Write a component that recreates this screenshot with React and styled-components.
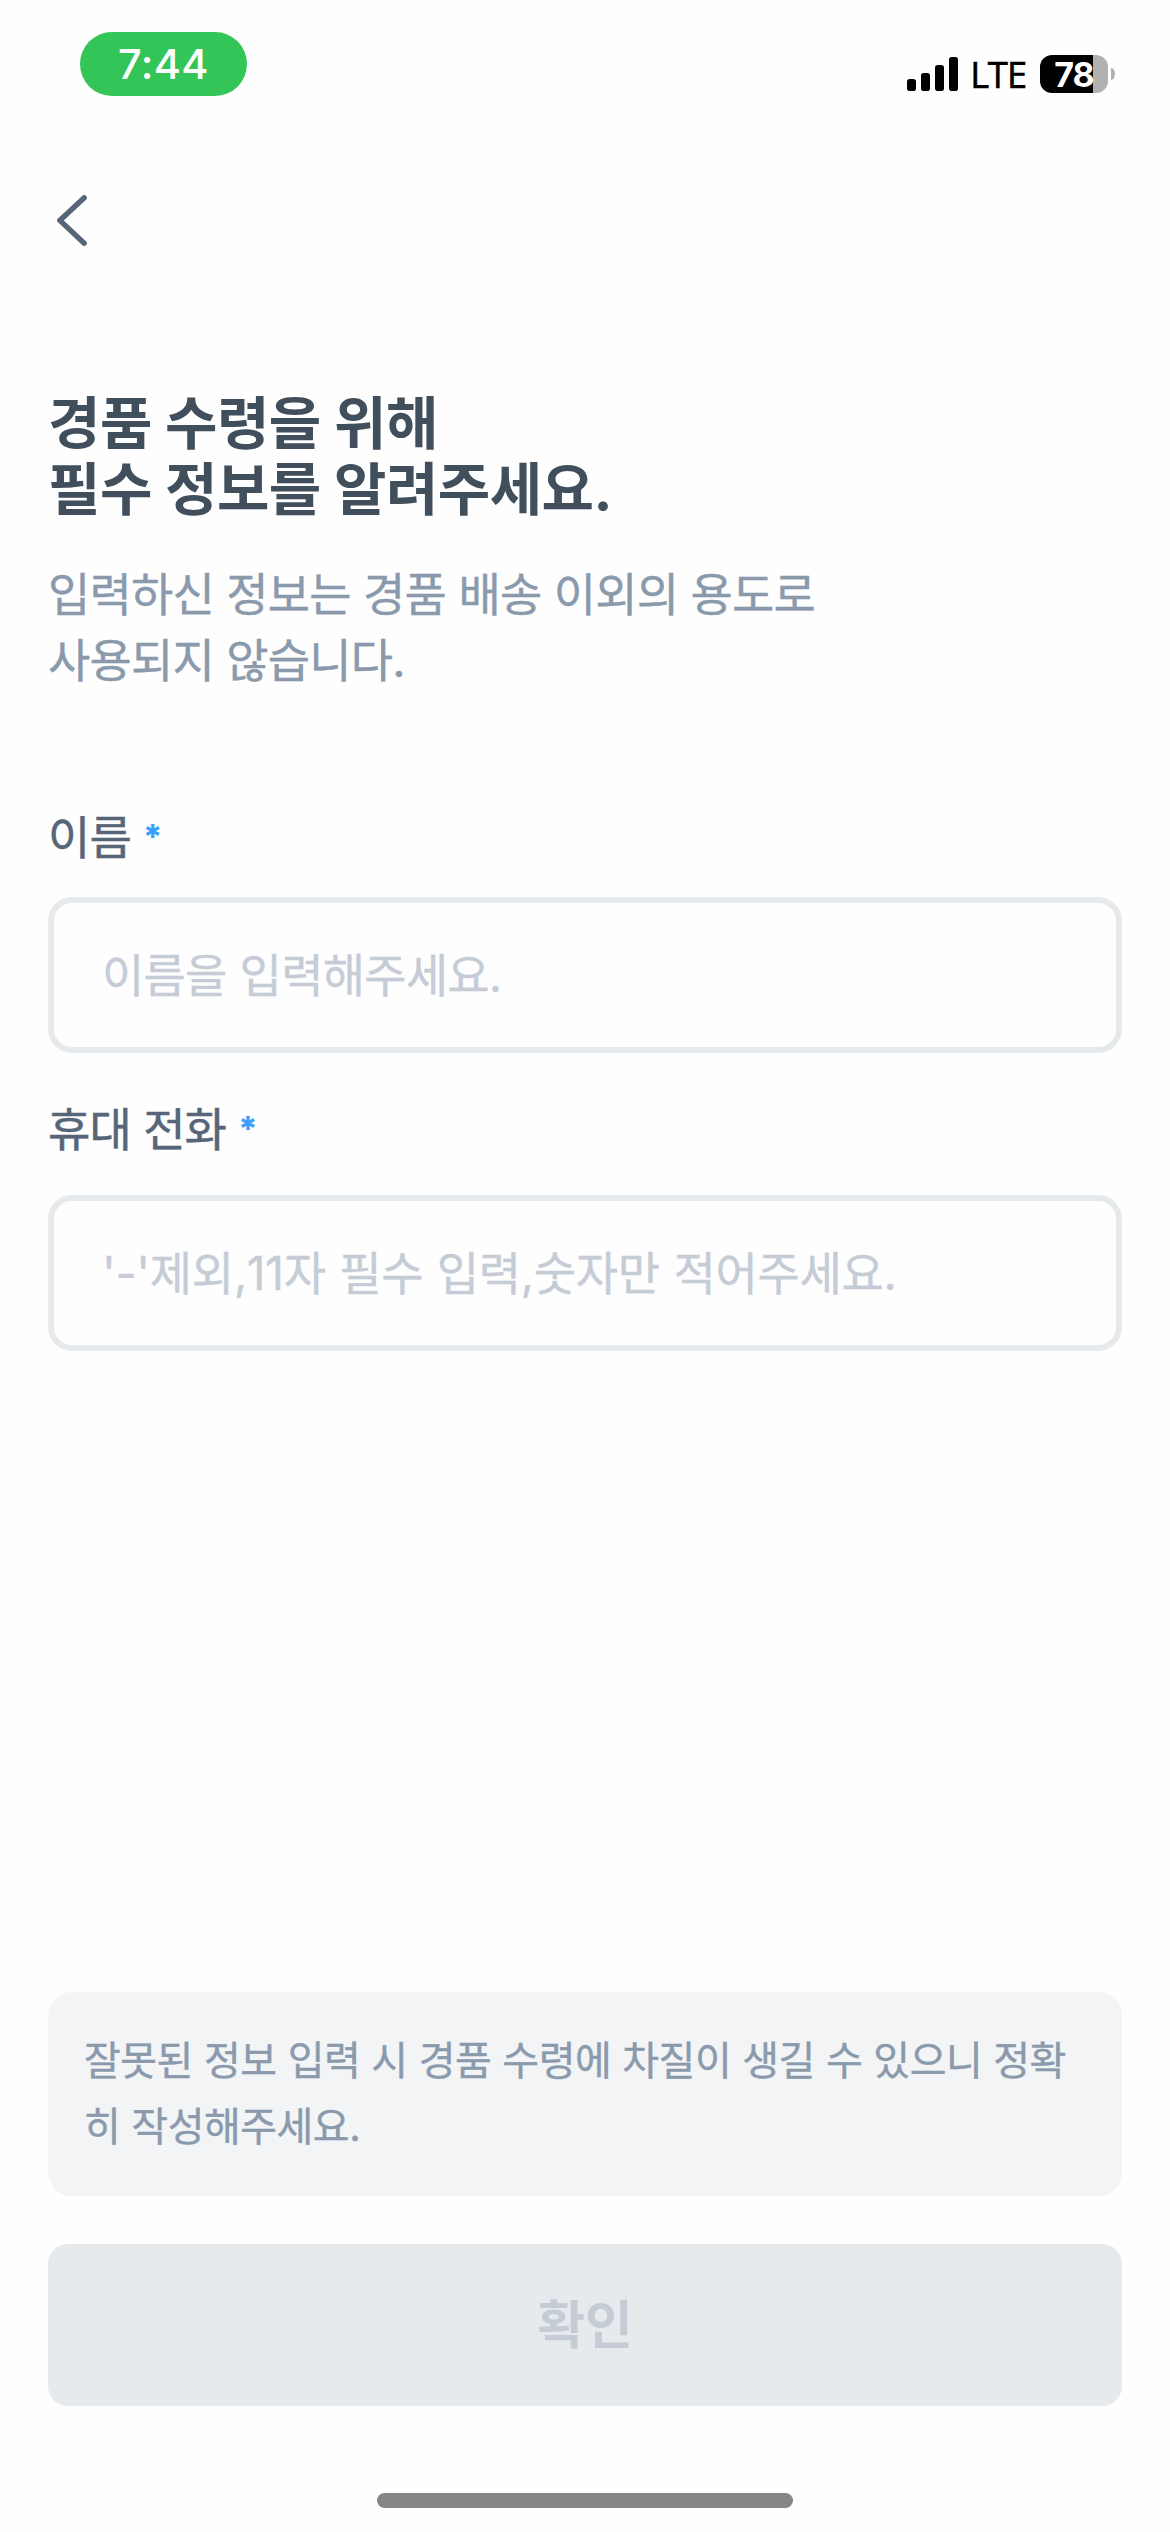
import React, { useState } from 'react';
import styled, { createGlobalStyle } from 'styled-components';

const FIELDS = [
  { id: 'name', label: '이름', placeholder: '이름을 입력해주세요.', type: 'text' },
  { id: 'phone', label: '휴대 전화', placeholder: "'-'제외,11자 필수 입력,숫자만 적어주세요.", type: 'tel' },
];

const SignalIcon = () => (
  <svg width="51" height="34" viewBox="0 0 51 34">
    <rect x="0" y="22" width="9" height="12" rx="2.8" />
    <rect x="14" y="16" width="9" height="18" rx="2.8" />
    <rect x="28" y="8" width="9" height="26" rx="2.8" />
    <rect x="42" y="0" width="9" height="34" rx="2.8" />
  </svg>
);

const BackIcon = () => (
  <svg width="30" height="51" viewBox="0 0 30 51" fill="none">
    <path
      d="M27.2 2.8L2.8 25.4L27.2 48.2"
      stroke="#566678"
      strokeWidth="5.4"
      strokeLinecap="round"
      strokeLinejoin="round"
    />
  </svg>
);

const StatusBar = () => {
  return (
    <StatusRow>
      <TimePill>7:44</TimePill>
      <StatusRight>
        <SignalIcon />
        <Carrier>LTE</Carrier>
        <Battery>
          <div className="body">78</div>
          <div className="cap" />
        </Battery>
      </StatusRight>
    </StatusRow>
  );
};

const App = () => {
  const [values, setValues] = useState({ name: '', phone: '' });

  const handleChange = (e) => {
    setValues({ ...values, [e.target.id]: e.target.value });
  };

  const isValid = values.name !== '' && values.phone.length === 11;

  return (
    <>
      <GlobalStyle />
      <Page>
        <StatusBar />
        <BackButton type="button">
          <BackIcon />
        </BackButton>
        <Title>
          경품 수령을 위해
          <br />
          필수 정보를 알려주세요.
        </Title>
        <Description>
          입력하신 정보는 경품 배송 이외의 용도로
          <br />
          사용되지 않습니다.
        </Description>
        <Form>
          {FIELDS.map((field) => (
            <Field key={field.id} $tall={field.id === 'phone'}>
              <label htmlFor={field.id}>
                {field.label}
                <Required>*</Required>
              </label>
              <Input
                id={field.id}
                type={field.type}
                placeholder={field.placeholder}
                value={values[field.id]}
                onChange={handleChange}
              />
            </Field>
          ))}
        </Form>
        <Bottom>
          <Notice>잘못된 정보 입력 시 경품 수령에 차질이 생길 수 있으니 정확히 작성해주세요.</Notice>
          <SubmitButton type="button" disabled={!isValid}>확인</SubmitButton>
        </Bottom>
        <HomeIndicator />
      </Page>
    </>
  );
};

export default App;

const GlobalStyle = createGlobalStyle`
  * {
    box-sizing: border-box;
    margin: 0;
    padding: 0;
  }
  body {
    background-color: #fefefe;
  }
  body, input, button {
    font-family: Inter, "Noto Sans CJK KR", sans-serif;
    word-spacing: 0.02em;
  }
`;

const Page = styled.div`
  display: flex;
  flex-direction: column;
  width: 1170px;
  height: 2532px;
  padding: 0 48px;
  overflow: hidden;
`;

const StatusRow = styled.header`
  display: flex;
  justify-content: space-between;
  align-items: flex-start;
  height: 132px;
  padding: 32px 7px 0 32px;
`;

const TimePill = styled.div`
  display: flex;
  justify-content: center;
  align-items: center;
  width: 167px;
  height: 64px;
  border-radius: 32px;
  background-color: #34c558;
  color: #fff;
  font-size: 41.5px;
  font-weight: 500;
  letter-spacing: 0.4px;
`;

const StatusRight = styled.div`
  display: flex;
  align-items: center;
  height: 38px;
  margin-top: 23px;
`;

const Carrier = styled.span`
  width: 82px;
  padding-left: 12px;
  font-family: "Noto Sans", sans-serif;
  font-size: 37px;
  line-height: 38px;
  letter-spacing: -1.2px;
  -webkit-text-stroke: 0.3px;
`;

const Battery = styled.div`
  display: flex;
  align-items: center;
  gap: 3px;
  .body {
    display: flex;
    justify-content: center;
    align-items: center;
    width: 68px;
    height: 38px;
    border-radius: 12px;
    background: linear-gradient(to right, #000 53px, #b1b1b1 53px);
    color: #fff;
    font-size: 34px;
    font-weight: 700;
    letter-spacing: -1px;
  }
  .cap {
    width: 4px;
    height: 12px;
    border-radius: 0 4px 4px 0 / 0 6px 6px 0;
    background-color: #b1b1b1;
  }
`;

const BackButton = styled.button`
  align-self: flex-start;
  display: flex;
  margin-top: 63px;
  padding: 0 9px;
  border: none;
  background: none;
`;

const Title = styled.h1`
  margin-top: 145px;
  color: #414e5c;
  font-size: 57px;
  font-weight: 700;
  line-height: 66px;
  letter-spacing: -0.55px;
`;

const Description = styled.p`
  margin-top: 38px;
  color: #8a9aac;
  font-size: 46px;
  line-height: 66px;
  letter-spacing: -0.85px;
  -webkit-text-stroke: 0.4px;
`;

const Form = styled.form`
  display: flex;
  flex-direction: column;
  gap: 44px;
  margin-top: 112px;
`;

const Field = styled.div`
  display: flex;
  flex-direction: column;
  gap: ${({ $tall }) => ($tall ? '34px' : '28px')};
  label {
    display: flex;
    color: #566678;
    font-size: 46px;
    line-height: 64px;
    letter-spacing: -0.9px;
    -webkit-text-stroke: 0.5px;
  }
`;

const Required = styled.span`
  margin-left: 12px;
  color: #3a9fff;
  font-size: 34px;
  font-weight: 800;
  -webkit-text-stroke: 0;
`;

const Input = styled.input`
  width: 100%;
  height: 156px;
  padding: 0 48px;
  border: 6px solid #e7eaed;
  border-radius: 24px;
  outline: none;
  background-color: #fefefe;
  color: #414e5c;
  font-size: 46px;
  font-kerning: none;
  letter-spacing: ${({ type }) => (type === 'tel' ? '-0.3px' : '-0.8px')};
  -webkit-text-stroke: 0.4px;
  &::placeholder {
    color: #c5ccd6;
    opacity: 1;
  }
`;

const Bottom = styled.div`
  display: flex;
  flex-direction: column;
  gap: 48px;
  margin-top: auto;
`;

const Notice = styled.p`
  height: 204px;
  padding: 36px;
  border-radius: 24px;
  background-color: #f2f4f6;
  color: #8a9aac;
  font-size: 40px;
  line-height: 66px;
  letter-spacing: -0.5px;
  -webkit-text-stroke: 0.4px;
`;

const SubmitButton = styled.button`
  height: 162px;
  padding-bottom: 8px;
  border: none;
  border-radius: 20px;
  background-color: #e6eaed;
  color: #c5ccd6;
  font-size: 52px;
  font-weight: 700;
`;

const HomeIndicator = styled.div`
  flex-shrink: 0;
  align-self: center;
  width: 416px;
  height: 15px;
  margin: 87px 0 24px;
  border-radius: 8px;
  background-color: #868686;
`;
